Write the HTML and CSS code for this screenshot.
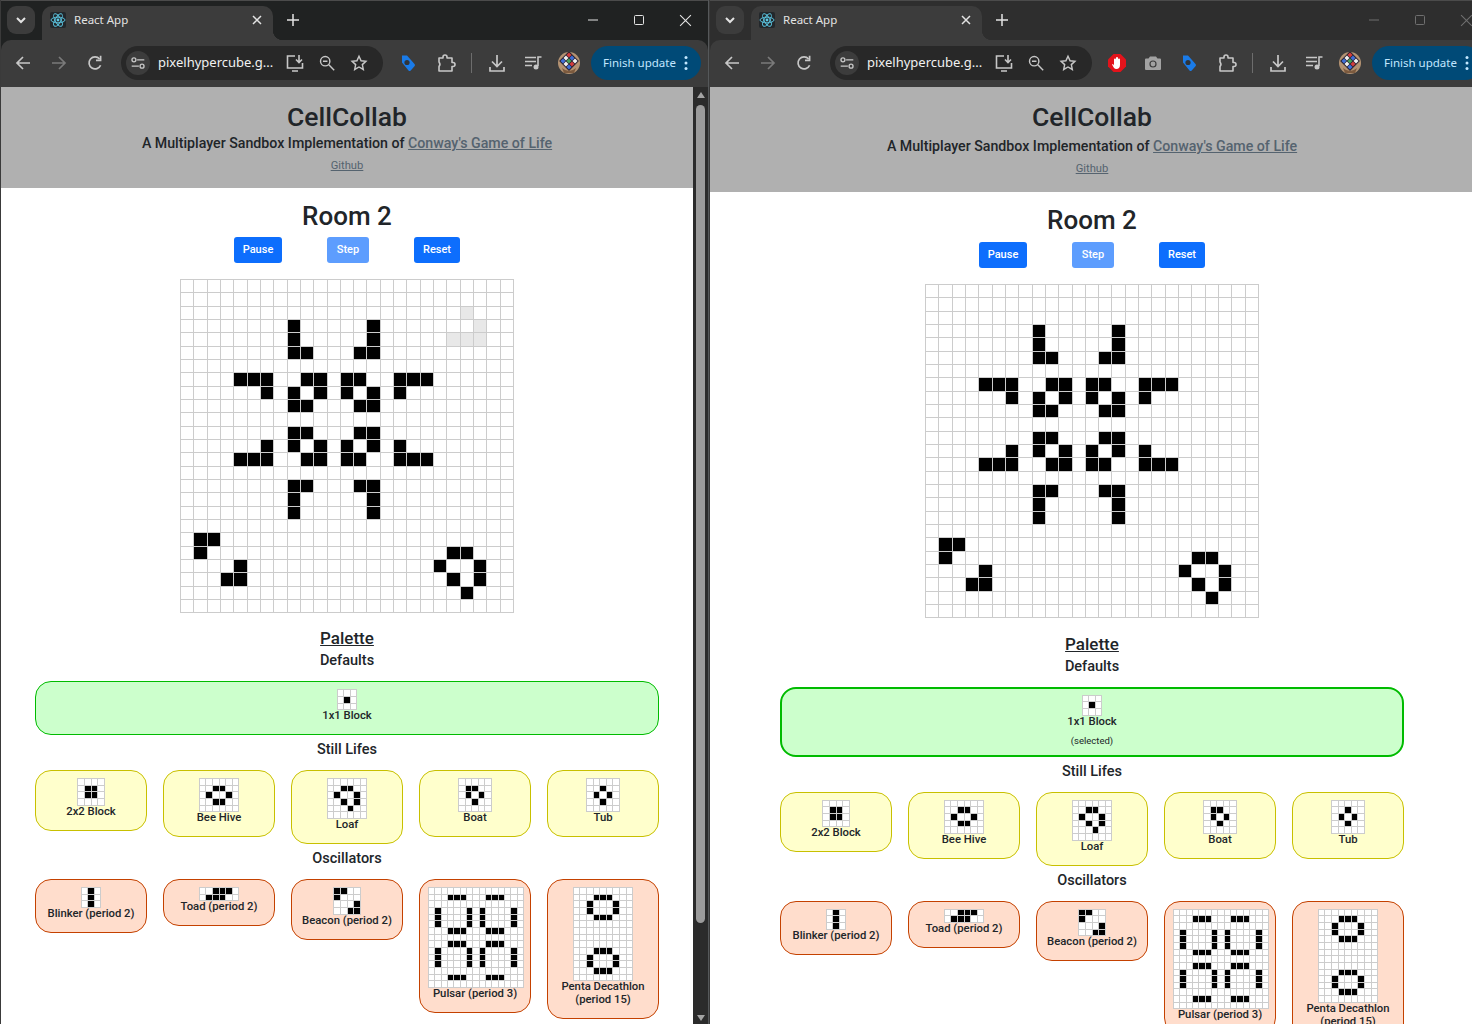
FILE: index.html
```html
<!DOCTYPE html>
<html lang="en">
<head>
	<meta charset="UTF-8">
	<title>CellCollab</title>
<link rel="stylesheet" href="styles.css">
</head>
<body>
  <svg class="sprite" xmlns="http://www.w3.org/2000/svg">
    <symbol id="i-chevron" viewBox="0 0 12 12"><path d="M2 4l4 4 4-4" fill="none" stroke="currentColor" stroke-width="2"/></symbol>
    <symbol id="i-react" viewBox="0 0 16 16"><rect width="16" height="16" rx="2" fill="#23272b"/><g fill="none" stroke="#5cc8e4" stroke-width=".9"><ellipse cx="8" cy="8" rx="7" ry="2.8"/><ellipse cx="8" cy="8" rx="7" ry="2.8" transform="rotate(60 8 8)"/><ellipse cx="8" cy="8" rx="7" ry="2.8" transform="rotate(120 8 8)"/></g><circle cx="8" cy="8" r="1.4" fill="#5cc8e4"/></symbol>
    <symbol id="i-x" viewBox="0 0 12 12"><path d="M2 2l8 8M10 2l-8 8" fill="none" stroke="currentColor" stroke-width="1.5"/></symbol>
    <symbol id="i-plus" viewBox="0 0 14 14"><path d="M7 1v12M1 7h12" fill="none" stroke="currentColor" stroke-width="1.5"/></symbol>
    <symbol id="i-min" viewBox="0 0 12 12"><path d="M1 6h10" fill="none" stroke="currentColor"/></symbol>
    <symbol id="i-max" viewBox="0 0 12 12"><rect x="1.5" y="1.5" width="9" height="9" rx="1" fill="none" stroke="currentColor"/></symbol>
    <symbol id="i-close" viewBox="0 0 12 12"><path d="M1 1l10 10M11 1L1 11" fill="none" stroke="currentColor"/></symbol>
    <symbol id="i-back" viewBox="0 0 20 20"><path d="M17 10H4M10 4l-6 6 6 6" fill="none" stroke="currentColor" stroke-width="1.7"/></symbol>
    <symbol id="i-forward" viewBox="0 0 20 20"><path d="M3 10h13M10 4l6 6-6 6" fill="none" stroke="currentColor" stroke-width="1.7"/></symbol>
    <symbol id="i-reload" viewBox="0 0 20 20"><path d="M15.6 12.2A6 6 0 1 1 14.6 6" fill="none" stroke="currentColor" stroke-width="1.7"/><path d="M15.6 2.8v4.6H11" fill="none" stroke="currentColor" stroke-width="1.7"/></symbol>
    <symbol id="i-tune" viewBox="0 0 20 20"><g fill="none" stroke="currentColor" stroke-width="1.5"><path d="M9 6.5h8M3 13.5h8"/><circle cx="5.5" cy="6.5" r="2.2"/><circle cx="14.5" cy="13.5" r="2.2"/></g></symbol>
    <symbol id="i-install" viewBox="0 0 20 20"><g fill="none" stroke="currentColor" stroke-width="1.6"><path d="M10 3H2.500v12h15v-5M7 18h6"/><path d="M14 2v7M11 6.500l3 3 3-3"/></g></symbol>
    <symbol id="i-zoom" viewBox="0 0 20 20"><g fill="none" stroke="currentColor" stroke-width="1.6"><circle cx="8" cy="8" r="5.2"/><path d="M12 12l6 6M5.500 8h5"/></g></symbol>
    <symbol id="i-star" viewBox="0 0 20 20"><path d="M10 2.500l2.300 5 5.400.6-4 3.700 1.100 5.400L10 14.400l-4.800 2.800 1.100-5.400-4-3.700 5.400-.6z" fill="none" stroke="currentColor" stroke-width="1.6"/></symbol>
    <symbol id="i-tag" viewBox="0 0 20 20"><path d="M4 2.500h5l7.500 8.500a1.600 1.600 0 0 1 0 2.200l-3.800 4.300a1.600 1.600 0 0 1-2.200 0L4 9.500z" fill="#1a7be8"/><circle cx="9" cy="9.500" r="2.600" fill="#2f343a"/></symbol>
    <symbol id="i-puzzle" viewBox="0 0 20 20"><path d="M3 5h4V4a2 2 0 0 1 4 0v1h5v4.500h1a2 2 0 0 1 0 4h-1V18H3v-4.500a3.500 3.500 0 0 0 0-4.500z" fill="none" stroke="currentColor" stroke-width="1.6" stroke-linejoin="round"/></symbol>
    <symbol id="i-download" viewBox="0 0 20 20"><path d="M10 2v11M5 8.500l5 5 5-5M3 14v4h14v-4" fill="none" stroke="currentColor" stroke-width="1.7"/></symbol>
    <symbol id="i-queue" viewBox="0 0 20 20"><g fill="none" stroke="currentColor" stroke-width="1.6"><path d="M2 4.500h11M2 8.500h11M2 12.500h7M15 13V4h3.500"/></g><circle cx="13" cy="14" r="2.500" fill="currentColor"/></symbol>
    <symbol id="i-avatar" viewBox="0 0 22 22"><circle cx="11" cy="11" r="11" fill="#b39272"/><path d="M4 16q7 6 14 0l-2 5H6z" fill="#7c5a3e"/><g transform="rotate(45 11 9)"><rect x="4" y="2" width="14" height="14" fill="#2a2230"/><rect x="5" y="3" width="3.500" height="3.500" fill="#d43d3d"/><rect x="9.200" y="3" width="3.500" height="3.500" fill="#3f6fd8"/><rect x="13.500" y="3" width="3.500" height="3.500" fill="#f0f0f0"/><rect x="5" y="7.300" width="3.500" height="3.500" fill="#f0f0f0"/><rect x="9.200" y="7.300" width="3.500" height="3.500" fill="#46a35a"/><rect x="13.500" y="7.300" width="3.500" height="3.500" fill="#d43d3d"/><rect x="5" y="11.500" width="3.500" height="3.500" fill="#3f6fd8"/><rect x="9.200" y="11.500" width="3.500" height="3.500" fill="#f0f0f0"/><rect x="13.500" y="11.500" width="3.500" height="3.500" fill="#3f6fd8"/></g></symbol>
    <symbol id="i-stop" viewBox="0 0 20 20"><path d="M6.500 1h7L19 6.500v7L13.500 19h-7L1 13.500v-7z" fill="#e3131b"/><path d="M7 6.500a1 1 0 0 1 2 0V5a1 1 0 0 1 2 0v1.500a1 1 0 0 1 2 0V12c0 2.500-1.500 4-3.500 4-2.500 0-3-2-4.500-4.500l1-.5L7 12.500z" fill="#fff"/></symbol>
    <symbol id="i-camera" viewBox="0 0 20 20"><path d="M7 3.500h6l1.500 2H17a1 1 0 0 1 1 1V16a1 1 0 0 1-1 1H3a1 1 0 0 1-1-1V6.500a1 1 0 0 1 1-1h2.500z" fill="#a2a2a2"/><circle cx="10" cy="11" r="3.600" fill="#3c3c3c"/><circle cx="10" cy="11" r="2.400" fill="#a2a2a2"/></symbol>
    <symbol id="i-dots" viewBox="0 0 4 16"><circle cx="2" cy="2.500" r="1.500" fill="currentColor"/><circle cx="2" cy="8" r="1.500" fill="currentColor"/><circle cx="2" cy="13.500" r="1.500" fill="currentColor"/></symbol>
  </svg>

  <!-- left window -->
  <div class="window win-a">
    <div class="tabbar">
      <span class="tab-search"><svg class="ic12"><use href="#i-chevron"/></svg></span>
      <div class="tab">
        <svg class="ic16"><use href="#i-react"/></svg>
        <span class="tab-title">React App</span>
        <svg class="ic12 tab-x"><use href="#i-x"/></svg>
      </div>
      <span class="new-tab"><svg class="ic14"><use href="#i-plus"/></svg></span>
      <div class="win-btns">
        <span class="win-btn"><svg class="ic12"><use href="#i-min"/></svg></span>
        <span class="win-btn"><svg class="ic12"><use href="#i-max"/></svg></span>
        <span class="win-btn"><svg class="ic12 big"><use href="#i-close"/></svg></span>
      </div>
    </div>
    <div class="toolbar">
      <span class="slot"><svg class="ic20"><use href="#i-back"/></svg></span>
      <span class="slot off"><svg class="ic20"><use href="#i-forward"/></svg></span>
      <span class="slot"><svg class="ic20"><use href="#i-reload"/></svg></span>
      <div class="omnibox">
        <span class="site-btn"><svg class="ic18"><use href="#i-tune"/></svg></span>
        <span class="url">pixelhypercube.g...</span>
        <span class="omni-slot"><svg class="ic20"><use href="#i-install"/></svg></span>
        <span class="omni-slot"><svg class="ic18"><use href="#i-zoom"/></svg></span>
        <span class="omni-slot"><svg class="ic18"><use href="#i-star"/></svg></span>
      </div>
      <div class="exts">
        <span class="slot"><svg class="ic20"><use href="#i-tag"/></svg></span>
      </div>
      <span class="slot puzzle"><svg class="ic20"><use href="#i-puzzle"/></svg></span>
      <span class="sep"></span>
      <span class="slot"><svg class="ic20"><use href="#i-download"/></svg></span>
      <span class="slot"><svg class="ic20"><use href="#i-queue"/></svg></span>
      <span class="slot"><svg class="ic22"><use href="#i-avatar"/></svg></span>
      <div class="finish">Finish update<svg class="dots"><use href="#i-dots"/></svg></div>
    </div>
    <div class="viewport">
      <div class="page">
        <header class="site-head">
          <h1>CellCollab</h1>
          <p class="tagline">A Multiplayer Sandbox Implementation of <a href="#">Conway's Game of Life</a></p>
          <p class="repo"><a href="#">Github</a></p>
        </header>
        <h2 class="room">Room 2</h2>
        <div class="controls">
          <button class="btn">Pause</button>
          <button class="btn btn-off">Step</button>
          <button class="btn">Reset</button>
        </div>
        <div class="grid board" data-pattern="boardA"></div>
        <h3 class="palette-title">Palette</h3>
        <h4 class="group">Defaults</h4>
        <div class="palette">
          <div class="card green wide"><div class="grid" data-pattern="single"></div><div class="label">1x1 Block</div></div>
        </div>
        <h4 class="group after-wide">Still Lifes</h4>
        <div class="palette cols">
          <div class="card yellow"><div class="grid" data-pattern="block"></div><div class="label">2x2 Block</div></div>
          <div class="card yellow"><div class="grid" data-pattern="hive"></div><div class="label">Bee Hive</div></div>
          <div class="card yellow"><div class="grid" data-pattern="loaf"></div><div class="label">Loaf</div></div>
          <div class="card yellow"><div class="grid" data-pattern="boat"></div><div class="label">Boat</div></div>
          <div class="card yellow"><div class="grid" data-pattern="tub"></div><div class="label">Tub</div></div>
        </div>
        <h4 class="group after-row">Oscillators</h4>
        <div class="palette cols">
          <div class="card orange"><div class="grid" data-pattern="blinker"></div><div class="label">Blinker (period 2)</div></div>
          <div class="card orange"><div class="grid" data-pattern="toad"></div><div class="label">Toad (period 2)</div></div>
          <div class="card orange"><div class="grid" data-pattern="beacon"></div><div class="label">Beacon (period 2)</div></div>
          <div class="card orange"><div class="grid" data-pattern="pulsar"></div><div class="label">Pulsar (period 3)</div></div>
          <div class="card orange"><div class="grid" data-pattern="penta"></div><div class="label">Penta Decathlon (period 15)</div></div>
        </div>
      </div>
      <div class="scrollbar">
        <span class="arrow-up"></span>
        <span class="thumb"></span>
        <span class="arrow-down"></span>
      </div>
    </div>
  </div>

  <!-- right window, not focused -->
  <div class="window win-b">
    <div class="tabbar">
      <span class="tab-search"><svg class="ic12"><use href="#i-chevron"/></svg></span>
      <div class="tab">
        <svg class="ic16"><use href="#i-react"/></svg>
        <span class="tab-title">React App</span>
        <svg class="ic12 tab-x"><use href="#i-x"/></svg>
      </div>
      <span class="new-tab"><svg class="ic14"><use href="#i-plus"/></svg></span>
      <div class="win-btns">
        <span class="win-btn"><svg class="ic12"><use href="#i-min"/></svg></span>
        <span class="win-btn"><svg class="ic12"><use href="#i-max"/></svg></span>
        <span class="win-btn"><svg class="ic12 big"><use href="#i-close"/></svg></span>
      </div>
    </div>
    <div class="toolbar">
      <span class="slot"><svg class="ic20"><use href="#i-back"/></svg></span>
      <span class="slot off"><svg class="ic20"><use href="#i-forward"/></svg></span>
      <span class="slot"><svg class="ic20"><use href="#i-reload"/></svg></span>
      <div class="omnibox">
        <span class="site-btn"><svg class="ic18"><use href="#i-tune"/></svg></span>
        <span class="url">pixelhypercube.g...</span>
        <span class="omni-slot"><svg class="ic20"><use href="#i-install"/></svg></span>
        <span class="omni-slot"><svg class="ic18"><use href="#i-zoom"/></svg></span>
        <span class="omni-slot"><svg class="ic18"><use href="#i-star"/></svg></span>
      </div>
      <div class="exts">
        <span class="slot"><svg class="ic20"><use href="#i-stop"/></svg></span>
        <span class="slot"><svg class="ic20"><use href="#i-camera"/></svg></span>
        <span class="slot"><svg class="ic20"><use href="#i-tag"/></svg></span>
      </div>
      <span class="slot puzzle"><svg class="ic20"><use href="#i-puzzle"/></svg></span>
      <span class="sep"></span>
      <span class="slot"><svg class="ic20"><use href="#i-download"/></svg></span>
      <span class="slot"><svg class="ic20"><use href="#i-queue"/></svg></span>
      <span class="slot"><svg class="ic22"><use href="#i-avatar"/></svg></span>
      <div class="finish">Finish update<svg class="dots"><use href="#i-dots"/></svg></div>
    </div>
    <div class="viewport">
      <div class="page">
        <header class="site-head">
          <h1>CellCollab</h1>
          <p class="tagline">A Multiplayer Sandbox Implementation of <a href="#">Conway's Game of Life</a></p>
          <p class="repo"><a href="#">Github</a></p>
        </header>
        <h2 class="room">Room 2</h2>
        <div class="controls">
          <button class="btn">Pause</button>
          <button class="btn btn-off">Step</button>
          <button class="btn">Reset</button>
        </div>
        <div class="grid board" data-pattern="boardB"></div>
        <h3 class="palette-title">Palette</h3>
        <h4 class="group">Defaults</h4>
        <div class="palette">
          <div class="card green wide selected"><div class="grid" data-pattern="single"></div><div class="label">1x1 Block</div><div class="note">(selected)</div></div>
        </div>
        <h4 class="group after-wide">Still Lifes</h4>
        <div class="palette cols">
          <div class="card yellow"><div class="grid" data-pattern="block"></div><div class="label">2x2 Block</div></div>
          <div class="card yellow"><div class="grid" data-pattern="hive"></div><div class="label">Bee Hive</div></div>
          <div class="card yellow"><div class="grid" data-pattern="loaf"></div><div class="label">Loaf</div></div>
          <div class="card yellow"><div class="grid" data-pattern="boat"></div><div class="label">Boat</div></div>
          <div class="card yellow"><div class="grid" data-pattern="tub"></div><div class="label">Tub</div></div>
        </div>
        <h4 class="group after-row">Oscillators</h4>
        <div class="palette cols">
          <div class="card orange"><div class="grid" data-pattern="blinker"></div><div class="label">Blinker (period 2)</div></div>
          <div class="card orange"><div class="grid" data-pattern="toad"></div><div class="label">Toad (period 2)</div></div>
          <div class="card orange"><div class="grid" data-pattern="beacon"></div><div class="label">Beacon (period 2)</div></div>
          <div class="card orange"><div class="grid" data-pattern="pulsar"></div><div class="label">Pulsar (period 3)</div></div>
          <div class="card orange"><div class="grid" data-pattern="penta"></div><div class="label">Penta Decathlon (period 15)</div></div>
        </div>
      </div>
      <div class="scrollbar">
        <span class="arrow-up"></span>
        <span class="thumb"></span>
        <span class="arrow-down"></span>
      </div>
    </div>
  </div>

<script>
// board cells: row -> live columns
var sun = {
  3: [8, 14], 4: [8, 14], 5: [8, 9, 13, 14],
  7: [4, 5, 6, 9, 10, 12, 13, 16, 17, 18],
  8: [6, 8, 10, 12, 14, 16],
  9: [8, 9, 13, 14],
  11: [8, 9, 13, 14],
  12: [6, 8, 10, 12, 14, 16],
  13: [4, 5, 6, 9, 10, 12, 13, 16, 17, 18],
  15: [8, 9, 13, 14], 16: [8, 14], 17: [8, 14],
  19: [1, 2], 20: [1, 20, 21], 21: [4, 19, 22], 22: [3, 4, 20, 22], 23: [21]
};

var pulsarRows = {};
[1, 6, 8, 13].forEach(function(r) { pulsarRows[r] = [3, 4, 5, 9, 10, 11]; });
[3, 4, 5, 9, 10, 11].forEach(function(r) { pulsarRows[r] = [1, 6, 8, 13]; });

var patterns = {
  boardA: { cols: 25, rows: 25, cell: 13.333, live: sun, ghost: { 2: [21], 3: [22], 4: [20, 21, 22] } },
  boardB: { cols: 25, rows: 25, cell: 13.333, live: sun },
  single: { cols: 3, rows: 3, live: { 1: [1] } },
  block: { cols: 4, rows: 4, live: { 1: [1, 2], 2: [1, 2] } },
  hive: { cols: 6, rows: 5, live: { 1: [2, 3], 2: [1, 4], 3: [2, 3] } },
  loaf: { cols: 6, rows: 6, live: { 1: [2, 3], 2: [1, 4], 3: [2, 4], 4: [3] } },
  boat: { cols: 5, rows: 5, live: { 1: [1, 2], 2: [1, 3], 3: [2] } },
  tub: { cols: 5, rows: 5, live: { 1: [2], 2: [1, 3], 3: [2] } },
  blinker: { cols: 3, rows: 3, live: { 0: [1], 1: [1], 2: [1] } },
  toad: { cols: 6, rows: 2, live: { 0: [2, 3, 4], 1: [1, 2, 3] } },
  beacon: { cols: 4, rows: 4, live: { 0: [0, 1], 1: [0], 2: [3], 3: [2, 3] } },
  // wider than the card, so the columns get squeezed
  pulsar: { cols: 15, rows: 15, cell: 6.33, live: pulsarRows },
  penta: { cols: 9, rows: 14, live: {
    1: [3, 4, 5], 2: [2, 6], 3: [2, 6], 4: [3, 4, 5],
    9: [3, 4, 5], 10: [2, 6], 11: [2, 6], 12: [3, 4, 5]
  } }
};

var grids = document.querySelectorAll("[data-pattern]");
for (var g = 0; g < grids.length; g++) {
  var p = patterns[grids[g].getAttribute("data-pattern")];
  var html = "";
  for (var r = 0; r < p.rows; r++) {
    for (var c = 0; c < p.cols; c++) {
      var cls = "cell";
      if (p.live[r] && p.live[r].indexOf(c) > -1) cls += " live";
      if (p.ghost && p.ghost[r] && p.ghost[r].indexOf(c) > -1) cls += " ghost";
      html += '<i class="' + cls + '"></i>';
    }
  }
  grids[g].innerHTML = html;
  grids[g].style.gridTemplateColumns = "repeat(" + p.cols + ", " + (p.cell || 6.667) + "px)";
  grids[g].style.gridTemplateRows = "repeat(" + p.rows + ", " + (p.rows === 25 ? 13.333 : 6.667) + "px)";
}
</script>
</body>
</html>
```

FILE: styles.css
```css
@charset "UTF-8";
* {
  box-sizing: border-box;
}

body {
  margin: 0;
  height: 1024px;
  overflow: hidden;
  display: flex;
  background: #202222;
  color: #212529;
  font: 500 14px/1.2 Roboto, "Liberation Sans", sans-serif;
}

h1, h2, h3, h4, p {
  margin: 0;
  font-weight: 500;
}

.sprite {
  display: none;
}

/* window chrome */
.window {
  flex: none;
  height: 1024px;
  display: flex;
  flex-direction: column;
  border-left: 1px solid #3a3a3a;
  color: #e3e3e3;
  font-family: "Noto Sans", "Open Sans", sans-serif;
  font-weight: 400;
}
.win-a {
  width: 709px;
  border-right: 1px solid #55585a;
  background: #202222;
}
.win-b {
  width: 780px;
  background: #2e2e2e;
}

.ic12 { width: 12px; height: 12px; }
.ic12.big { width: 13px; height: 13px; }
.ic14 { width: 14px; height: 14px; }
.ic16 { width: 16px; height: 16px; flex: none; }
.ic18 { width: 18px; height: 18px; }
.ic20 { width: 20px; height: 20px; }
.ic22 { width: 22px; height: 22px; }

.tabbar {
  height: 40px;
  flex: none;
  display: flex;
  align-items: flex-start;
  padding: 5px 0 0 6px;
  border-top: 1px solid #4b4b4b;
}
.tab-search {
  width: 28px;
  height: 28px;
  border-radius: 9px;
  background: #3c3c3c;
  display: flex;
  align-items: center;
  justify-content: center;
}
.tab {
  position: relative;
  width: 231px;
  height: 34px;
  margin-left: 7px;
  padding: 0 10px 6px 8px;
  border-radius: 10px 10px 0 0;
  background: #3c3c3c;
  display: flex;
  align-items: center;
  gap: 8px;
  font-size: 11.5px;
}
.tab::after {
  content: "";
  position: absolute;
  right: -10px;
  bottom: 0;
  width: 10px;
  height: 10px;
  background: radial-gradient(circle at 100% 0, transparent 10px, #3c3c3c 10.5px);
}
.tab-title {
  flex: 1;
}
.new-tab {
  width: 14px;
  height: 14px;
  margin: 7px 0 0 13px;
}
.win-btns {
  margin-left: auto;
  display: flex;
  margin-top: -5px;
}
.win-btn {
  width: 46px;
  height: 38px;
  display: flex;
  align-items: center;
  justify-content: center;
}
.win-b .win-btn {
  color: #6f6f6f;
}

.toolbar {
  height: 47px;
  flex: none;
  display: flex;
  align-items: center;
  padding: 0 7px 1px 4px;
  background: #3c3c3c;
  border-radius: 10px 10px 0 0;
  color: #c7c7c7;
}
.slot {
  width: 36px;
  height: 34px;
  flex: none;
  display: flex;
  align-items: center;
  justify-content: center;
}
.slot.off {
  color: #7a7a7a;
}
.slot.puzzle {
  margin-left: 2px;
}
.omnibox {
  width: 262px;
  height: 34px;
  flex: none;
  margin: 0 7px 0 8px;
  padding: 0 8px 0 5px;
  border-radius: 17px;
  background: #282828;
  display: flex;
  align-items: center;
}
.site-btn {
  width: 24px;
  height: 24px;
  border-radius: 50%;
  background: #3c3c3c;
  display: flex;
  align-items: center;
  justify-content: center;
}
.url {
  flex: 1;
  margin-left: 8px;
  font-size: 13px;
  color: #f1f1f1;
  white-space: nowrap;
}
.omni-slot {
  width: 32px;
  flex: none;
  display: flex;
  align-items: center;
  justify-content: center;
}
.exts {
  display: flex;
  flex: none;
}
.sep {
  width: 1px;
  height: 20px;
  flex: none;
  margin: 0 7px;
  background: #6d6d6d;
}
.finish {
  width: 110px;
  height: 34px;
  flex: none;
  margin-left: 4px;
  padding: 0 12px;
  border-radius: 17px;
  background: #004a77;
  color: #c2e7ff;
  display: flex;
  align-items: center;
  justify-content: space-between;
  font-size: 11.5px;
  white-space: nowrap;
}
.dots {
  width: 4px;
  height: 16px;
  margin-right: 1px;
}

/* page */
.viewport {
  flex: 1;
  min-height: 0;
  display: flex;
}
.page {
  flex: 1;
  min-width: 0;
  overflow: hidden;
  background: #fff;
  color: #212529;
  font-family: Roboto, "Liberation Sans", sans-serif;
  font-weight: 500;
  text-align: center;
}

.scrollbar {
  width: 15px;
  flex: none;
  background: #2b2b2b;
  display: flex;
  flex-direction: column;
  align-items: center;
  padding: 5px 0 3px;
}
.arrow-up,
.arrow-down {
  width: 0;
  height: 0;
  flex: none;
  border-left: 4px solid transparent;
  border-right: 4px solid transparent;
}
.arrow-up {
  border-bottom: 6px solid #a3a3a3;
}
.arrow-down {
  border-top: 6px solid #a3a3a3;
  margin-top: auto;
}
.thumb {
  width: 9px;
  height: 818px;
  flex: none;
  margin-top: 7px;
  border-radius: 5px;
  background: #9b9b9b;
}

.site-head {
  height: 101px;
  padding-top: 15px;
  background: #b0b0b0;
}
.site-head h1 {
  font-size: 26.500px;
  line-height: 30px;
}
.tagline {
  margin-top: 3px;
  font-size: 14.200px;
  line-height: 17px;
}
.repo {
  margin-top: 7px;
  font-size: 11.200px;
  font-weight: 400;
  line-height: 14px;
}
.site-head a {
  color: #55636f;
}
.win-b .site-head {
  height: 105px;
}
.win-b .tagline {
  margin-top: 6px;
}

.room {
  margin-top: 13px;
  font-size: 26px;
  line-height: 30px;
}

.controls {
  margin-top: 6px;
  display: flex;
  justify-content: center;
  gap: 45px;
}
.btn {
  height: 26px;
  padding: 0;
  border: 0;
  border-radius: 3px;
  background: #0d6efd;
  color: #fff;
  font: inherit;
  font-size: 11px;
}
.btn:nth-child(1) { width: 48px; }
.btn:nth-child(2) { width: 42px; }
.btn:nth-child(3) { width: 46px; }
.btn-off {
  background: #5d9dfe;
}
.win-b .controls {
  margin-top: 7px;
}

.grid {
  display: grid;
  width: max-content;
  margin: 0 auto;
  border-top: 1px solid #ccc;
  border-left: 1px solid #ccc;
}
.cell {
  display: block;
  border-right: 1px solid #ccc;
  border-bottom: 1px solid #ccc;
  background: #fff;
}
.cell.live {
  background: #000;
}
.cell.ghost {
  background: #e8e8e8;
}
.board {
  margin-top: 16px;
}

.palette-title {
  margin-top: 15px;
  font-size: 17px;
  line-height: 20px;
  text-decoration: underline;
}
.win-b .palette-title {
  margin-top: 15.500px;
}
.group {
  margin-top: 5px;
  font-size: 14.500px;
  line-height: 16px;
}
.group.after-wide {
  margin-top: 7px;
}
.group.after-row {
  margin-top: 7px;
}

.palette {
  width: 624px;
  margin: 12px auto 0;
}
.palette.cols {
  display: grid;
  grid-template-columns: repeat(5, 112px);
  justify-content: space-between;
  align-items: start;
}

.card {
  padding: 7px 8px 12px;
  border: 1px solid;
  border-radius: 16px;
}
.card.wide {
  width: 100%;
}
.card.green {
  background: #ccffcc;
  border-color: #00bb00;
}
.card.yellow {
  background: #ffffcc;
  border-color: #c8c000;
}
.card.orange {
  background: #ffddcc;
  border-color: #c44100;
}
.card.selected {
  padding: 6px 8px 8px;
  border-width: 2px;
}
.label {
  margin-top: -1px;
  font-size: 11.300px;
  line-height: 13px;
}
.note {
  margin-top: 7px;
  font-size: 9.500px;
  font-weight: 400;
  line-height: 12px;
}
```
